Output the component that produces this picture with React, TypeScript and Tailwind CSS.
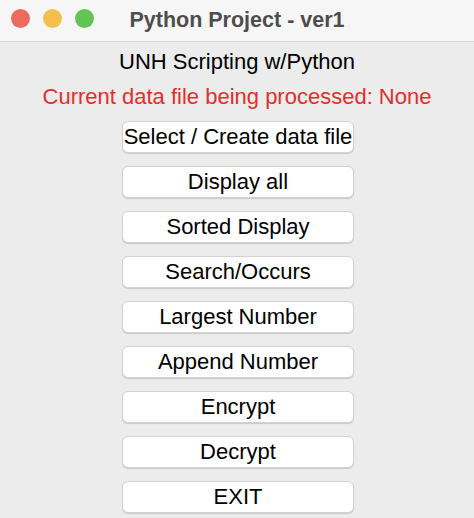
export default function App() {
  const buttons = [
    "Select / Create data file",
    "Display all",
    "Sorted Display",
    "Search/Occurs",
    "Largest Number",
    "Append Number",
    "Encrypt",
    "Decrypt",
    "EXIT",
  ];

  return (
    <div
      className="flex h-[518px] w-[474px] flex-col overflow-hidden bg-[#ececec]"
      style={{ fontFamily: '"Liberation Sans", Arial, sans-serif' }}
    >
      <div className="relative flex h-[42px] shrink-0 items-center justify-center border-b border-[#d6d6d6] bg-[#f6f6f6]">
        <div className="absolute left-[11px] top-[9px] flex gap-[13px]">
          <span className="h-[19px] w-[19px] rounded-full bg-[#ed6a5e]" />
          <span className="h-[19px] w-[19px] rounded-full bg-[#f5bf4f]" />
          <span className="h-[19px] w-[19px] rounded-full bg-[#61c554]" />
        </div>
        <span className="text-[21.5px] font-bold text-[#4d4d4d]">Python Project - ver1</span>
      </div>

      <div className="flex flex-col items-center pt-[8px]">
        <p className="text-[22px] leading-[24px] text-black">UNH Scripting w/Python</p>
        <p className="mt-[11px] text-[22px] leading-[24px] text-[#e0302a]">
          Current data file being processed: None
        </p>
        <div className="mt-[12px] flex flex-col gap-[13px] pl-[2px]">
          {buttons.map((label) => (
            <button
              key={label}
              className="h-[32px] w-[232px] rounded-[6px] border border-[#d2d2d2] bg-white text-[22px] leading-none text-black shadow-[0_1px_1px_rgba(0,0,0,0.15)]"
            >
              {label}
            </button>
          ))}
        </div>
      </div>
    </div>
  );
}
